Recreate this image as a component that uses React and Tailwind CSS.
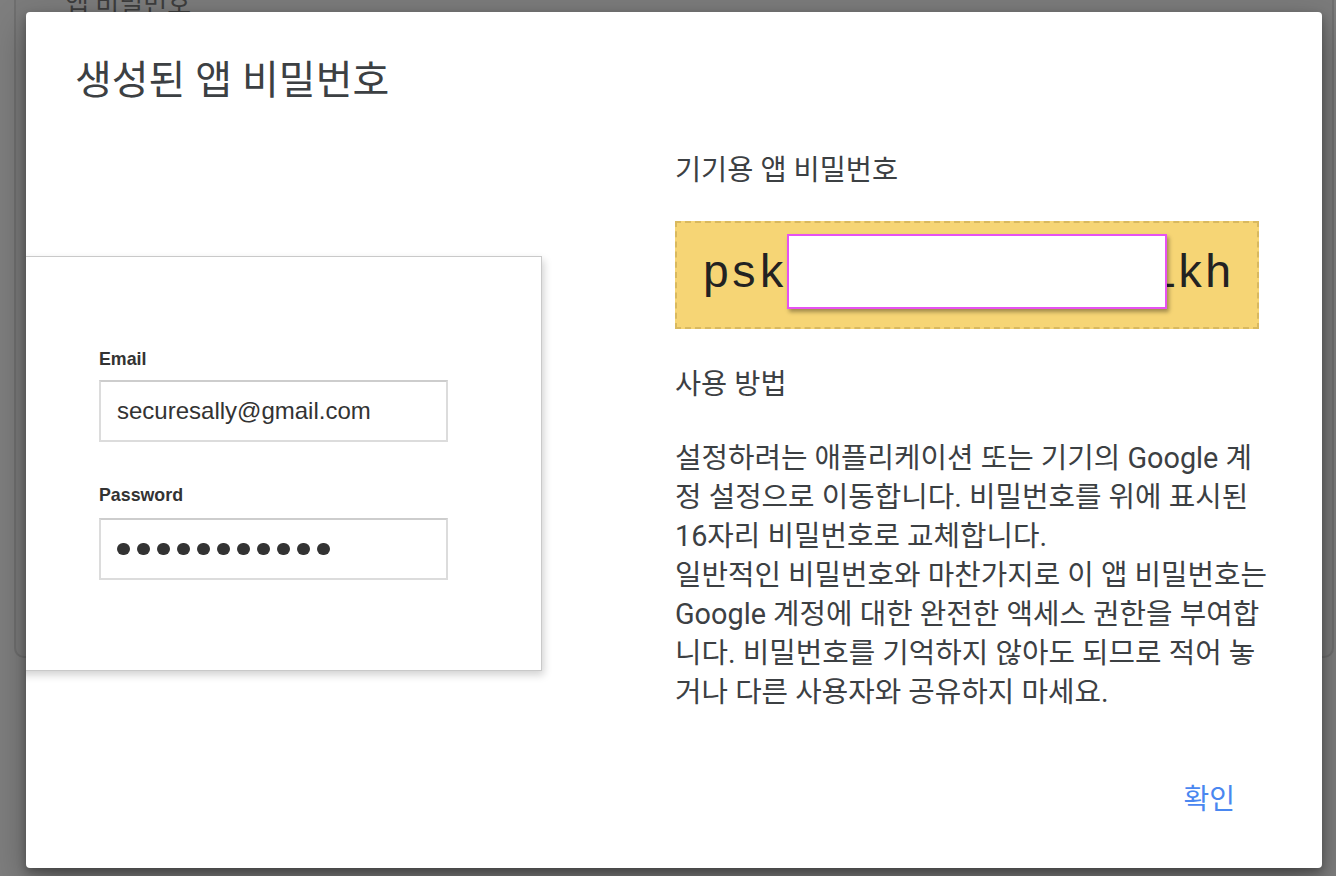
const KR = { fontFamily: '"Roboto", "Noto Sans CJK KR", sans-serif' }
const ARIAL = { fontFamily: '"Liberation Sans", Arial, sans-serif' }

const bodyLines = [
  "설정하려는 애플리케이션 또는 기기의 Google 계",
  "정 설정으로 이동합니다. 비밀번호를 위에 표시된",
  "16자리 비밀번호로 교체합니다.",
  "일반적인 비밀번호와 마찬가지로 이 앱 비밀번호는",
  "Google 계정에 대한 완전한 액세스 권한을 부여합",
  "니다. 비밀번호를 기억하지 않아도 되므로 적어 놓",
  "거나 다른 사용자와 공유하지 마세요.",
]

function LoginMock() {
  return (
    <div className="ml-[-21px] mt-[149px] w-[537px] h-[415px] flex-none bg-white border border-[#c9c9c9] shadow-[2px_4px_8px_rgba(0,0,0,0.18)] pt-[92px] pl-[93px]" style={ARIAL}>
      <div className="h-[20px] leading-[20px] text-[17.8px] font-bold text-[#333]">Email</div>
      <div className="mt-[11px] w-[349px] h-[62px] border-2 border-[#dcdcdc] border-t-[#cdcdcd] flex items-center pl-[16px] text-[24px] text-[#333]">
        securesally@gmail.com
      </div>
      <div className="mt-[43px] h-[20px] leading-[20px] text-[17.8px] font-bold text-[#333]">Password</div>
      <div className="mt-[13px] w-[349px] h-[62px] border-2 border-[#dcdcdc] border-t-[#cdcdcd] flex items-center pl-[16px] gap-[7.5px]">
        {Array.from({ length: 11 }).map((_, i) => (
          <span key={i} className="w-[12.5px] h-[12.5px] rounded-full bg-[#333]" />
        ))}
      </div>
    </div>
  )
}

export default function App() {
  return (
    <div className="relative w-[1336px] h-[876px] overflow-hidden bg-[#7e7e7e]" style={KR}>
      {/* page behind the overlay */}
      <div className="absolute left-[14px] top-[-60px] w-[1320px] h-[718px] rounded-[10px] border-2 border-[#6f6f6f] bg-[#7b7b7b]">
        <div className="ml-[49px] mt-[46px] text-[26px] leading-[32px] text-[#3d3d3d]">앱 비밀번호</div>
      </div>

      {/* dialog */}
      <div className="absolute left-[26px] top-[12px] w-[1296px] h-[856px] bg-white rounded-[4px] overflow-hidden shadow-[0_4px_10px_rgba(0,0,0,0.3),0_14px_36px_rgba(0,0,0,0.3)]">
        <h2 className="pl-[49px] pt-[43px] text-[40px] leading-[52px] font-normal text-[#3c4043]">생성된 앱 비밀번호</h2>

        <div className="flex">
          <div className="w-[649px] flex-none">
            <LoginMock />
          </div>

          <div className="w-[584px] flex-none flex flex-col text-[#3c4043]">
            <div className="mt-[44px] text-[28.4px] leading-[39px]">기기용 앱 비밀번호</div>

            <div className="relative mt-[31px] h-[108px] bg-[#f6d575] border-2 border-dashed border-[#d9b95f] flex items-center justify-center">
              <span className="text-[46.5px] text-[#222] whitespace-pre" style={{ fontFamily: '"Liberation Mono", "Courier New", monospace' }}>
                pski 7mqa rb2e nlkh
              </span>
              <div className="absolute left-[110px] top-[11px] w-[380px] h-[75px] bg-white border-2 border-[#e652f2] shadow-[2px_3px_4px_rgba(0,0,0,0.35)]" />
            </div>

            <div className="mt-[36px] text-[28.4px] leading-[39px]">사용 방법</div>

            <div className="mt-[35px] text-[28.8px] leading-[39px] whitespace-nowrap">
              {bodyLines.map((line) => (
                <div key={line}>{line}</div>
              ))}
            </div>

            <div className="mt-[68px] flex justify-end">
              <button className="px-[24px] text-[28px] leading-[39px] text-[#4a87f0] bg-transparent border-0">확인</button>
            </div>
          </div>
        </div>
      </div>
    </div>
  )
}
